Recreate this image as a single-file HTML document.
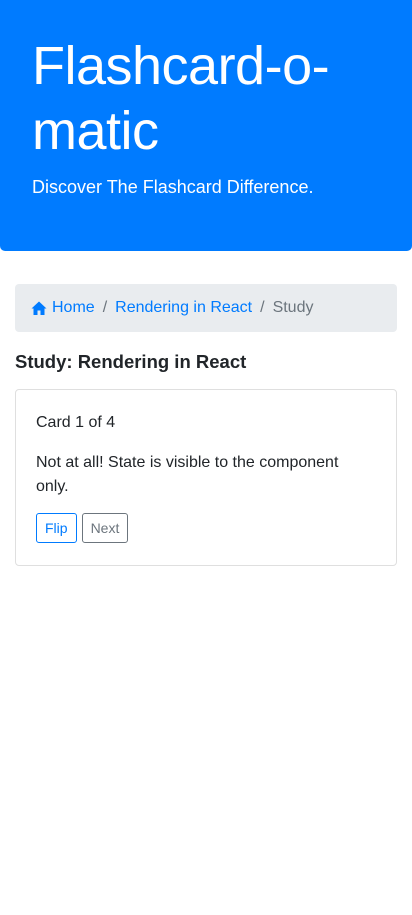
<!DOCTYPE html>
<html><head><meta charset="utf-8"><style>
*{box-sizing:border-box}
body{margin:0;width:412px;height:915px;background:#fff;font-family:"Liberation Sans",sans-serif;color:#212529;font-size:16px}
.jumbo{background:#007bff;color:#fff;height:251px;border-radius:0 0 5px 5px;padding:34px 32px}
.jumbo h1{margin:0;font-weight:300;font-size:54px;line-height:65px;letter-spacing:-0.5px}
.jumbo p{margin:13px 0 0;font-size:18px;font-weight:300}
.bc{margin:33px 15px 0;background:#e9ecef;border-radius:4px;height:48px;display:flex;align-items:center;padding:0 16px;font-size:16px}
.bc a{color:#007bff;text-decoration:none}
.bc .s{color:#6c757d;padding:0 8px}
.bc .c{color:#6c757d}
h4{margin:18px 15px 0;font-size:18.5px;font-weight:bold;line-height:24px}
.card{margin:15px 15px 0;border:1px solid #dfdfdf;border-radius:4px;height:177px;padding:21px 20px}
.card p{margin:0 0 16px;line-height:24px;font-size:16px;max-width:320px}
.btn{display:inline-block;border:1px solid;border-radius:3px;font-size:14px;padding:6px 8px;margin-right:5px;margin-top:-2px}
</style></head><body>
<div class="jumbo"><h1>Flashcard-o-<br>matic</h1><p>Discover The Flashcard Difference.</p></div>
<div class="bc"><svg width="16" height="16" viewBox="0 0 16 16" style="margin-right:5px"><path d="M8 1.5L0.5 8.5H2.5V15H6.5V10.5H9.5V15H13.5V8.5H15.5Z" fill="#007bff"/></svg><a>Home</a><span class="s">/</span><a>Rendering in React</a><span class="s">/</span><span class="c">Study</span></div>
<h4>Study: Rendering in React</h4>
<div class="card"><p>Card 1 of 4</p><p>Not at all! State is visible to the component<br>only.</p>
<span class="btn" style="color:#007bff;border-color:#007bff">Flip</span><span class="btn" style="color:#6c757d;border-color:#6c757d">Next</span></div>
</body></html>
